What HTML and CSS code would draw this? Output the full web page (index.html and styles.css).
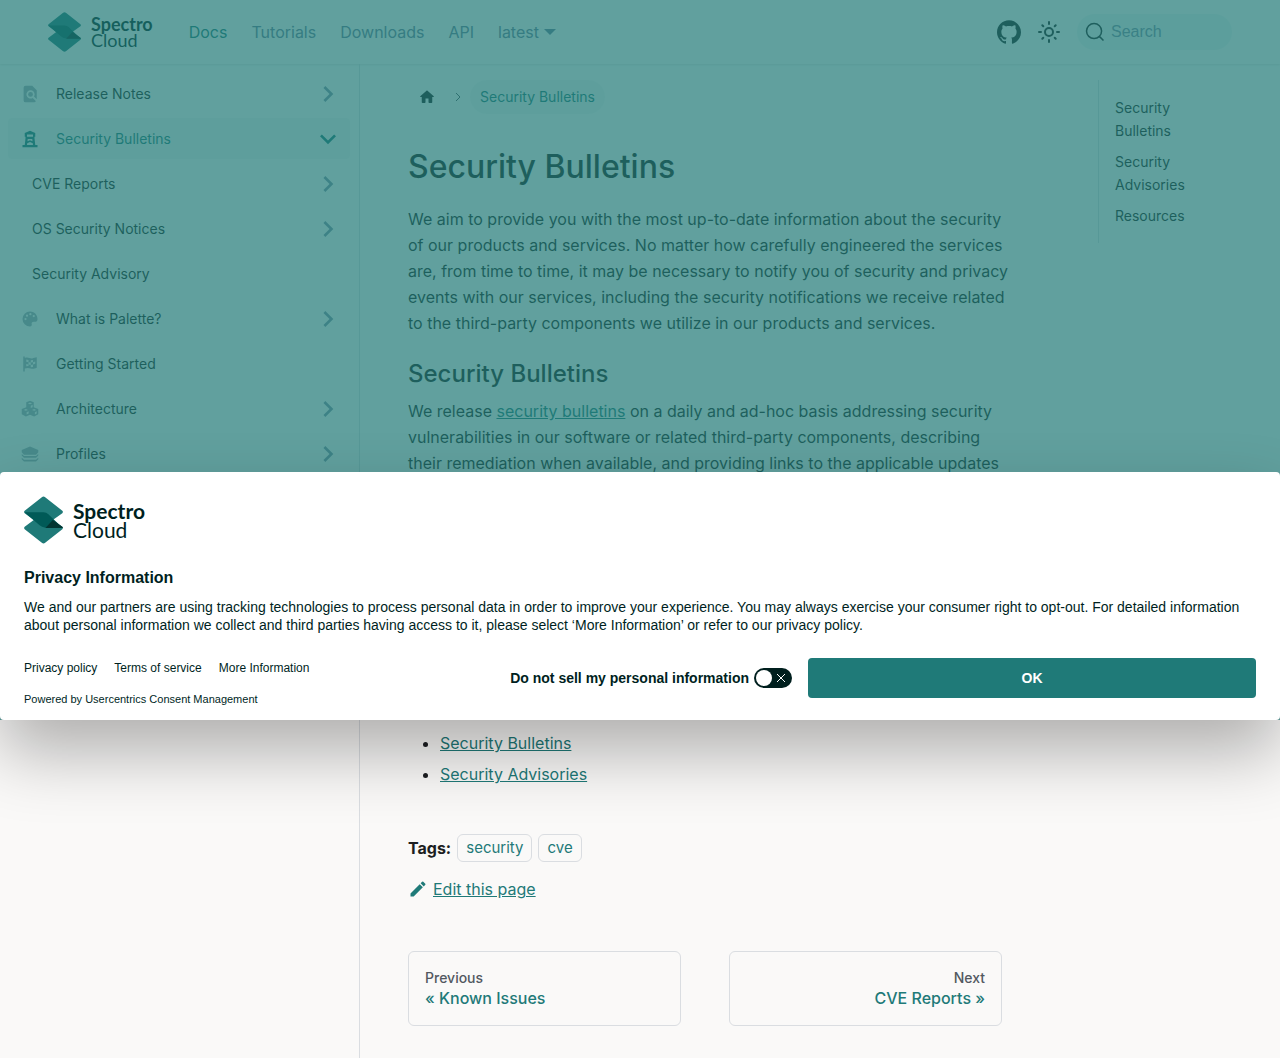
FILE: index.html
```html
<!DOCTYPE html>
<html lang="en">
<head>
<meta charset="utf-8">
<meta name="viewport" content="width=device-width, initial-scale=1">
<title>Security Bulletins | Palette</title>
<link rel="stylesheet" href="styles.css">
</head>
<body>
<svg class="sprite" aria-hidden="true">
  <symbol id="caret" viewBox="0 0 24 24"><path d="M7.41 15.41L12 10.83l4.59 4.58L18 14l-6-6-6 6z"/></symbol>
  <symbol id="mark" viewBox="0 0 40 48">
    <path fill="#1f7a78" d="M18.3.6Q20-.6 21.700.6L39.300 14.500Q40.500 15.700 39.300 17L29.500 24L39.300 31Q40.500 32.300 39.300 33.500L21.700 47.400Q20 48.600 18.300 47.400L.7 33.500Q-.5 32.300.7 31L10 24L.7 17Q-.5 15.700.7 14.500z"/>
    <path fill="#005a57" d="M.5 16H20Q23 16 25 18L29.500 22.500 39.500 32H22Q18 31.500 16 29.500z"/>
    <path fill="#033532" d="M29.500 24L39.300 31Q40 31.600 39.700 32.200H22z"/>
  </symbol>
</svg>

<header class="navbar">
  <a class="brand" href="#">
    <svg class="brand-mark"><use href="#mark"/></svg>
    <span class="brand-text"><b>Spectro</b><span>Cloud</span></span>
  </a>
  <nav class="nav-links" aria-label="Main">
    <a class="active" href="#">Docs</a>
    <a href="#">Tutorials</a>
    <a href="#">Downloads</a>
    <a href="#">API</a>
    <a class="version" href="#">latest</a>
  </nav>
  <div class="nav-tools">
    <a class="icon-link" href="#" aria-label="GitHub repository">
      <svg viewBox="0 0 24 24"><path d="M12 .297c-6.63 0-12 5.373-12 12 0 5.303 3.438 9.800 8.205 11.385.6.113.82-.258.82-.577 0-.285-.01-1.040-.015-2.040-3.338.724-4.042-1.610-4.042-1.610C4.422 18.070 3.633 17.700 3.633 17.700c-1.087-.744.084-.729.084-.729 1.205.084 1.838 1.236 1.838 1.236 1.070 1.835 2.809 1.305 3.495.998.108-.776.417-1.305.76-1.605-2.665-.3-5.466-1.332-5.466-5.930 0-1.310.465-2.380 1.235-3.220-.135-.303-.54-1.523.105-3.176 0 0 1.005-.322 3.300 1.230.96-.267 1.980-.399 3-.405 1.020.006 2.040.138 3 .405 2.280-1.552 3.285-1.230 3.285-1.230.645 1.653.24 2.873.12 3.176.765.84 1.230 1.910 1.230 3.220 0 4.610-2.805 5.625-5.475 5.920.42.36.81 1.096.81 2.220 0 1.606-.015 2.896-.015 3.286 0 .315.21.69.825.57C20.565 22.092 24 17.592 24 12.297c0-6.627-5.373-12-12-12"/></svg>
    </a>
    <button class="icon-link" type="button" aria-label="Switch colour mode">
      <svg viewBox="0 0 24 24"><circle class="line" cx="12" cy="12" r="4"/><path class="line" d="M12 2v2M12 20v2M2 12h2M20 12h2M5.300 5.300l1 1M17.700 17.700l1 1M18.700 5.300l-1 1M6.300 17.700l-1 1"/></svg>
    </button>
    <label class="search">
      <svg viewBox="0 0 20 20"><path d="M14.386 14.386l4.088 4.088-4.088-4.088c-2.942 2.942-7.711 2.942-10.653 0-2.942-2.942-2.942-7.711 0-10.653 2.942-2.942 7.711-2.942 10.653 0 2.942 2.942 2.942 7.711 0 10.653z"/></svg>
      <input type="search" placeholder="Search" aria-label="Search">
    </label>
  </div>
</header>

<div class="layout">
  <aside class="sidebar">
    <nav aria-label="Docs sidebar">
      <a class="item" href="#">
        <svg class="glyph" viewBox="0 0 24 24"><path fill-rule="evenodd" d="M6 1h9l6 6v12l-3.600-3.600a5.500 5.500 0 1 0-1.800 1.800L20 21.700 18 23H6a2.500 2.500 0 0 1-2.500-2.500v-17A2.500 2.500 0 0 1 6 1z"/><circle cx="12.700" cy="12.500" r="3.200"/></svg>
        <span>Release Notes</span><svg class="caret"><use href="#caret"/></svg></a>
      <a class="item current" href="#">
        <svg class="glyph" viewBox="0 0 24 24"><path fill-rule="evenodd" d="M12 1l7 3v5h-1v2l1 9h3v3H2v-3h3l1-9V9H5V4zM8 6v3h8V6zM9 12l-.4 3L12 13.500 15.400 15 15 12zM8.300 17.500L8 20h8l-.3-2.500L12 16z"/></svg>
        <span>Security Bulletins</span><svg class="caret"><use href="#caret"/></svg></a>
      <a class="item sub" href="#"><span>CVE Reports</span><svg class="caret"><use href="#caret"/></svg></a>
      <a class="item sub" href="#"><span>OS Security Notices</span><svg class="caret"><use href="#caret"/></svg></a>
      <a class="item sub" href="#"><span>Security Advisory</span></a>
      <a class="item" href="#">
        <svg class="glyph" viewBox="0 0 24 24"><path fill-rule="evenodd" d="M12 2a10 10 0 0 0 0 20c1.700 0 2.800-1.400 2.300-3-.6-2.200.5-3.500 2.700-3.500h2.500c1.500 0 2.500-1.200 2.500-3.500C22 6 17.500 2 12 2zM6 10.500a1.500 1.500 0 1 1 0 3 1.500 1.500 0 0 1 0-3zM8 6a1.500 1.500 0 1 1 0 3 1.500 1.500 0 0 1 0-3zM12.500 4a1.500 1.500 0 1 1 0 3 1.500 1.500 0 0 1 0-3zM17 6.500a1.500 1.500 0 1 1 0 3 1.500 1.500 0 0 1 0-3z"/></svg>
        <span>What is Palette?</span><svg class="caret"><use href="#caret"/></svg></a>
      <a class="item" href="#">
        <svg class="glyph" viewBox="0 0 24 24"><path fill-rule="evenodd" d="M3 2h2v2c4-2 7 1 10 .5 2-.3 4-1.500 6-1.500v14c-3 1-5 2-8 1s-5-1-8 0v4H3zM7 6v3l3 .5v-3zM13 7v3l3-.4v-3zM10 9.500v3l3 .7v-3.200zM16 9.500v3l3-1v-3zM7 12v3l3-.5v-2zM13 13.200v3l3-.3v-3.400z"/></svg>
        <span>Getting Started</span></a>
      <a class="item" href="#">
        <svg class="glyph" viewBox="0 0 24 24"><path fill-rule="evenodd" d="M12 1l5 2v6.500l6 2.500v7l-5.500 3L12 19.500 6.500 22 1 19v-7l6-2.500V3zM12 3.200L9.200 4.500 12 5.700l2.800-1.200zM13 7.500v3l2.500-1V6.400zM6.500 12L3.700 13.200l2.800 1.200 2.800-1.200zM7.500 16.200v3.200l2.700-1.300V15zM17.500 12l-2.800 1.200 2.800 1.200 2.800-1.200zM18.500 16.200v3.200l2.500-1.300V15z"/></svg>
        <span>Architecture</span><svg class="caret"><use href="#caret"/></svg></a>
      <a class="item" href="#">
        <svg class="glyph" viewBox="0 0 24 24"><path d="M12 2l11 4.500v3L20 13H4L1 9.500v-3zM1 12l3 2.500h16l3-2.500v2l-3 3H4l-3-3zM1 17l3 2.500h16l3-2.500v2L20 22H4l-3-3z"/></svg>
        <span>Profiles</span><svg class="caret"><use href="#caret"/></svg></a>
    </nav>
  </aside>

  <main class="main">
    <article class="doc">
      <nav class="crumbs" aria-label="Breadcrumbs">
        <a href="#" aria-label="Home page"><svg class="home" viewBox="0 0 24 24"><path d="M10 19v-5h4v5c0 .55.45 1 1 1h3c.55 0 1-.45 1-1v-7h1.700c.46 0 .68-.57.33-.87L12.670 3.600c-.38-.34-.96-.34-1.340 0l-8.360 7.530c-.34.3-.13.87.33.87H5v7c0 .55.45 1 1 1h3c.55 0 1-.45 1-1z"/></svg></a>
        <svg class="sep" viewBox="0 0 8 10"><path d="M2 1l4 4-4 4"/></svg>
        <span class="crumb">Security Bulletins</span>
      </nav>
      <h1>Security Bulletins</h1>
      <p>We aim to provide you with the most up-to-date information about the security<br>
        of our products and services. No matter how carefully engineered the services<br>
        are, from time to time, it may be necessary to notify you of security and privacy<br>
        events with our services, including the security notifications we receive related<br>
        to the third-party components we utilize in our products and services.</p>
      <h2>Security Bulletins</h2>
      <p>We release <a href="#">security bulletins</a> on a daily and ad-hoc basis addressing security<br>
        vulnerabilities in our software or related third-party components, describing<br>
        their remediation when available, and providing links to the applicable updates<br>
        for affected software.</p>
      <h2>Security Advisories</h2>
      <p>We release security advisories to inform you of important security issues<br>
        that may affect our products. They describe the affected versions and the<br>
        recommended actions, along with any workarounds that are available<br>
        until you can upgrade.</p>
      <h2>Resources</h2>
      <ul>
        <li><a href="#">Security Bulletins</a></li>
        <li><a href="#">Security Advisories</a></li>
      </ul>
      <div class="tags"><b>Tags:</b><a href="#">security</a><a href="#">cve</a></div>
      <a class="edit" href="#"><svg viewBox="0 0 40 40"><path d="M34.500 11.700l-3 3.100-6.300-6.300 3.100-3q.5-.5 1.200-.5t1.100.5l3.900 3.900q.5.4.5 1.100t-.5 1.200zM5 28.800l18.400-18.500 6.300 6.300L11.300 35H5z"/></svg><span>Edit this page</span></a>
      <nav class="pager" aria-label="Docs pages">
        <a href="#"><small>Previous</small><span>« Known Issues</span></a>
        <a class="next" href="#"><small>Next</small><span>CVE Reports »</span></a>
      </nav>
    </article>
    <nav class="toc" aria-label="On this page">
      <a href="#">Security Bulletins</a>
      <a href="#">Security Advisories</a>
      <a href="#">Resources</a>
    </nav>
  </main>
</div>

<div class="overlay">
  <section class="consent" role="dialog" aria-labelledby="consent-title">
    <div class="brand large">
      <svg class="brand-mark"><use href="#mark"/></svg>
      <span class="brand-text"><b>Spectro</b><span>Cloud</span></span>
    </div>
    <h2 id="consent-title">Privacy Information</h2>
    <p>We and our partners are using tracking technologies to process personal data in order to improve your experience. You may always exercise your consumer right to opt-out. For detailed information about personal information we collect and third parties having access to it, please select ‘More Information’ or refer to our privacy policy.</p>
    <div class="consent-foot">
      <div class="consent-left">
        <div>
          <div class="legal"><a href="#">Privacy policy</a><a href="#">Terms of service</a><a href="#">More Information</a></div>
          <div class="powered">Powered by <a href="#">Usercentrics Consent Management</a></div>
        </div>
        <label class="optout">Do not sell my personal information
          <span class="switch"><input type="checkbox"><svg viewBox="0 0 10 10"><path d="M1 1l8 8M9 1l-8 8"/></svg></span>
        </label>
      </div>
      <button class="ok" type="button">OK</button>
    </div>
  </section>
</div>
</body>
</html>
```
FILE: styles.css
```css
:root {
  --teal: #1f7a78;
  --ink: #1c1e21;
  --muted: #525860;
  --line: #dadde1;
  --page: #faf9f8;
}
* { box-sizing: border-box; }
body {
  margin: 0;
  position: relative;
  min-height: 100vh;
  display: flex;
  flex-direction: column;
  background: var(--page);
  color: var(--ink);
  font: 16px/26px Inter, "Open Sans", sans-serif;
}
a { color: var(--teal); }
svg { display: block; flex: none; }
.sprite { position: absolute; width: 0; height: 0; }

/* Logo */
.brand { display: flex; align-items: center; gap: 10px; color: #001f1e; text-decoration: none; }
.brand-mark { width: 33px; height: 40px; }
.brand-text { display: flex; flex-direction: column; font: 400 18px/16px Lato, sans-serif; }
.brand-text b { font-weight: 700; }
.large .brand-mark { width: 39px; height: 48px; }
.large .brand-text { font-size: 21px; line-height: 19px; }

/* Navbar */
.navbar {
  display: flex;
  align-items: center;
  height: 64px;
  padding: 0 48px;
  box-shadow: 0 1px 2px rgba(0, 0, 0, .1);
}
.nav-links { display: flex; gap: 24px; margin-left: 36px; flex: 1; }
.nav-links a { color: #6a7f9a; text-decoration: none; }
.nav-links .active { color: var(--teal); }
.version { display: flex; align-items: center; gap: 5px; }
.version::after { content: ""; border: 6px solid transparent; border-top-color: currentColor; border-bottom: 0; }
.nav-tools { display: flex; align-items: center; gap: 16px; }
.icon-link { padding: 0; border: 0; background: none; color: var(--ink); }
.icon-link svg { width: 24px; height: 24px; fill: currentColor; }
.icon-link .line { fill: none; stroke: currentColor; stroke-width: 2; stroke-linecap: round; }
.search {
  display: flex;
  align-items: center;
  gap: 6px;
  width: 155px;
  height: 36px;
  padding: 0 8px;
  border-radius: 18px;
  background: #ebf1f1;
}
.search svg { width: 20px; height: 20px; fill: none; stroke: var(--ink); stroke-width: 1.5; }
.search input {
  min-width: 0;
  flex: 1;
  padding: 0;
  border: 0;
  background: none;
  font: 16px "Liberation Sans", Arial, sans-serif;
}
.search input::placeholder { color: #7a8fa6; opacity: 1; }

/* Sidebar */
.layout { flex: 1; display: grid; grid-template-columns: 360px 1fr; }
.sidebar { padding: 9px 9px 8px 8px; border-right: 1px solid var(--line); }
.sidebar nav { display: flex; flex-direction: column; gap: 4px; }
.item {
  display: flex;
  align-items: center;
  height: 41px;
  padding: 0 6px 0 13px;
  border-radius: 4px;
  color: var(--ink);
  font-size: 14px;
  text-decoration: none;
}
.item span { flex: 1; }
.item.sub { padding-left: 24px; }
.glyph { width: 18px; height: 18px; margin-right: 17px; fill: #a3abb5; }
.caret { width: 32px; height: 32px; fill: #8494a8; transform: rotate(90deg); }
.current { background: #f2f2f2; color: var(--teal); }
.current .glyph { fill: var(--teal); }
.current .caret { fill: var(--teal); transform: rotate(180deg); }

/* Article */
.main {
  display: grid;
  grid-template-columns: minmax(0, 1fr) 134px;
  gap: 96px;
  align-items: start;
  padding: 16px 48px 32px;
}
.crumbs { display: flex; align-items: center; gap: 8px; margin-bottom: 33px; font-size: 14px; }
.crumbs a { padding: 0 10px; }
.home { width: 18px; height: 18px; fill: var(--ink); }
.sep { width: 8px; height: 10px; fill: none; stroke: var(--muted); }
.crumb { padding: 4px 10px; border-radius: 17px; background: #f2f2f2; color: var(--teal); }
h1 { margin: 0 0 19px; font-size: 32px; line-height: 40px; font-weight: 500; }
h2 { margin: 23px 0 9px; font-size: 24px; line-height: 30px; font-weight: 500; }
p { margin: 0; }
.doc p { margin-right: -16px; }
ul { margin: 0; padding-left: 32px; }
li + li { margin-top: 5px; }
.tags { display: flex; align-items: center; gap: 6px; margin-top: 47px; }
.tags a {
  padding: 0 8px;
  border: 1px solid var(--line);
  border-radius: 6px;
  font-size: 15px;
  text-decoration: none;
}
.edit { display: flex; align-items: center; gap: 5px; margin-top: 14px; }
.edit svg { width: 20px; height: 20px; fill: currentColor; }
.pager { display: grid; grid-template-columns: 1fr 1fr; gap: 48px; margin-top: 49px; }
.pager a {
  display: flex;
  flex-direction: column;
  padding: 16px;
  border: 1px solid var(--line);
  border-radius: 6px;
  line-height: 22px;
  font-weight: 500;
  text-decoration: none;
}
.pager small { color: var(--muted); font-size: 14px; line-height: 19px; }
.pager .next { text-align: right; }

/* Table of contents */
.toc {
  display: flex;
  flex-direction: column;
  gap: 8px;
  padding: 16px;
  border-left: 1px solid var(--line);
}
.toc a { color: var(--ink); font-size: 14px; line-height: 23px; text-decoration: none; }

/* Consent dialog */
.overlay {
  position: absolute;
  inset: 0 0 auto;
  height: 720px;
  display: flex;
  align-items: flex-end;
  background: rgba(31, 122, 120, .7);
}
.consent {
  width: 100%;
  padding: 24px 24px 13px;
  border-radius: 4px;
  background: #fff;
  box-shadow: 0 32px 68px rgba(0, 0, 0, .3);
  color: #001f1e;
  font: 14px/18px "Liberation Sans", Arial, sans-serif;
}
.consent h2 { margin: 24px 0 10px; font-size: 16px; line-height: 20px; font-weight: 700; }
.consent a { color: inherit; text-decoration: none; }
.consent-foot { display: grid; grid-template-columns: 12fr 7fr; gap: 16px; align-items: start; margin-top: 24px; }
.consent-left { display: flex; justify-content: space-between; align-items: start; }
.legal { display: flex; gap: 17px; font-size: 12px; line-height: 20px; }
.powered { margin-top: 13px; font-size: 11px; line-height: 16px; }
.optout { display: flex; align-items: center; gap: 5px; height: 40px; font-weight: 700; }
.switch { display: grid; width: 38px; height: 20px; align-items: center; }
.switch > * { grid-area: 1 / 1; }
.switch input {
  appearance: none;
  width: 38px;
  height: 20px;
  margin: 0;
  padding: 2px;
  border-radius: 10px;
  background: #001f1e;
}
.switch input::before { content: ""; display: block; width: 16px; height: 16px; border-radius: 8px; background: #fff; }
.switch svg { justify-self: end; width: 10px; height: 10px; margin-right: 6px; fill: none; stroke: #fff; }
.ok {
  height: 40px;
  border: 0;
  border-radius: 4px;
  background: var(--teal);
  color: #fff;
  font: 700 14px "Liberation Sans", Arial, sans-serif;
}
```
